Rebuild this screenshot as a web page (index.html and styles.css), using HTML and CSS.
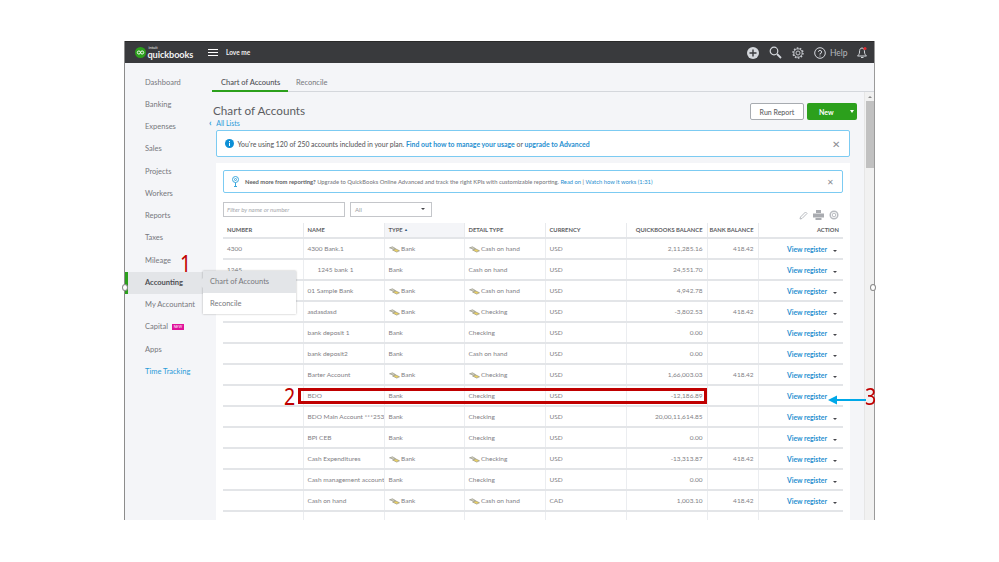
FILE: index.html
```html
<!DOCTYPE html>
<html lang="en">
<head>
<meta charset="utf-8">
<title>Chart of Accounts</title>
<link rel="stylesheet" href="styles.css">
</head>
<body>
<svg class="defs" width="0" height="0" aria-hidden="true">
  <symbol id="cash" viewBox="0 0 11 7">
    <path d="M.5 1.800 3.500.8 6.500 2.500 4.500 3.200z" fill="#d8d6c0" stroke="#8a8a80" stroke-width=".6"/>
    <path d="M3.500 4l3.500-1 3.500 1.800-2.800 1.300z" fill="#ecd264" stroke="#8a8a80" stroke-width=".6"/>
  </symbol>
</svg>
<div class="frame">
  <header class="topbar">
    <div class="logo">
      <svg class="logo-mark" viewBox="0 0 12 12" width="11" height="11"><circle cx="6" cy="6" r="6" fill="#2ca01c"/><circle cx="4.200" cy="6" r="1.700" fill="none" stroke="#fff" stroke-width="1"/><circle cx="7.800" cy="6" r="1.700" fill="none" stroke="#fff" stroke-width="1"/></svg>
      <div class="logo-text"><span class="intuit">intuit</span><span class="qb">quickbooks</span></div>
    </div>
    <div class="burger"><i></i><i></i><i></i></div>
    <span class="company">Love me</span>
    <div class="top-icons">
      <svg width="12" height="12" viewBox="0 0 12 12"><circle cx="6" cy="6" r="6" fill="#d4d7dc"/><path d="M6 2.500v7M2.500 6h7" stroke="#393a3d" stroke-width="1.400"/></svg>
      <svg width="13" height="13" viewBox="0 0 13 13" fill="none" stroke="#d4d7dc"><circle cx="5" cy="5" r="3.800" stroke-width="1.200"/><path d="M8 8l4 4" stroke-width="1.800"/></svg>
      <svg width="12" height="12" viewBox="0 0 12 12" fill="none" stroke="#c4c7cc"><circle cx="6" cy="6" r="2" stroke-width="1"/><circle cx="6" cy="6" r="4.200" stroke-width="1"/><circle cx="6" cy="6" r="5" stroke-width="1.400" stroke-dasharray="1.600 1.500"/></svg>
      <span class="help"><svg width="12" height="12" viewBox="0 0 12 12" fill="none" stroke="#d4d7dc"><circle cx="6" cy="6" r="5.300"/><path d="M4.400 4.800A1.600 1.600 0 1 1 6 6.600v1M6 8.600v1"/></svg><span class="help-text">Help</span></span>
      <svg class="bell" width="13" height="13" viewBox="0 0 13 13" fill="none"><path d="M6 2C4 2 3.500 4 3.500 6c0 2-1 3-2 4h9c-1-1-2-2-2-4 0-2-.5-4-2.500-4zM5 11.500h2.500" stroke="#d4d7dc"/><circle cx="9" cy="2.500" r="1.500" fill="#e0282e"/></svg>
    </div>
  </header>
  <div class="body">
    <nav class="sidebar">
      <a class="nav-item">Dashboard</a>
      <a class="nav-item">Banking</a>
      <a class="nav-item">Expenses</a>
      <a class="nav-item">Sales</a>
      <a class="nav-item">Projects</a>
      <a class="nav-item">Workers</a>
      <a class="nav-item">Reports</a>
      <a class="nav-item">Taxes</a>
      <a class="nav-item">Mileage</a>
      <a class="nav-item active">Accounting</a>
      <a class="nav-item">My Accountant</a>
      <a class="nav-item">Capital <span class="new-badge">NEW</span></a>
      <a class="nav-item">Apps</a>
      <a class="nav-item link">Time Tracking</a>
    </nav>
    <main class="main">
      <div class="tabs">
        <span class="tab current">Chart of Accounts</span>
        <span class="tab">Reconcile</span>
      </div>
      <div class="workspace">
        <div class="content">
          <div class="title-row">
            <div class="title-col">
              <h1 class="title">Chart of Accounts</h1>
              <a class="all-lists"><span class="chev">‹</span> All Lists</a>
            </div>
            <div class="actions">
              <button class="btn-run">Run Report</button>
              <div class="btn-new"><span class="new-label">New</span><span class="new-caret"></span></div>
            </div>
          </div>
          <div class="banner">
            <svg class="info" width="9" height="9" viewBox="0 0 9 9"><circle cx="4.500" cy="4.500" r="4.500" fill="#0d8fd6"/><path d="M4.500 2v1M4.500 3.800V7" stroke="#fff"/></svg>
            <span class="banner-text"><span>You're using 120 of 250 accounts included in your plan.</span> <a class="blue">Find out how to manage your usage</a> or <a class="blue">upgrade to Advanced</a></span>
            <span class="close">✕</span>
          </div>
          <section class="panel">
            <div class="banner small">
              <svg class="bulb" width="7" height="11" viewBox="0 0 7 11" fill="none" stroke="#3aa7dc"><circle cx="3.500" cy="3.500" r="3"/><circle cx="3.500" cy="3.500" r="1"/><path d="M3.500 6.500V10M2 10.500h3"/></svg>
              <span class="banner-text"><b class="need">Need more from reporting?</b> Upgrade to QuickBooks Online Advanced and track the right KPIs with customizable reporting. <a class="blue">Read on</a> | <a class="blue">Watch how it works (1:31)</a></span>
              <span class="close">✕</span>
            </div>
            <div class="filters">
              <span class="filter-input">Filter by name or number</span>
              <span class="filter-select">All<i class="caret"></i></span>
            </div>
            <div class="tools">
              <svg width="9" height="9" viewBox="0 0 9 9" fill="none" stroke="#b8bbc0"><path d="M1 8l.5-2L6.500 1 8 2.500 3 7.500z"/></svg>
              <svg width="11" height="10" viewBox="0 0 11 10"><path d="M3 0h5v3H3zM0 3.500h11v4H0zM2.500 8h6v2h-6z" fill="#a9abb0"/></svg>
              <svg width="10" height="10" viewBox="0 0 10 10" fill="none" stroke="#b8bbc0"><circle cx="5" cy="5" r="1.800"/><circle cx="5" cy="5" r="3.800" stroke-width="1.500"/></svg>
            </div>
            <table class="accounts">
              <colgroup><col class="c1"><col class="c2"><col class="c3"><col class="c4"><col class="c5"><col class="c6"><col class="c7"><col class="c8"></colgroup>
              <thead><tr><th>NUMBER</th><th>NAME</th><th class="sorted">TYPE <span class="up">▲</span></th><th>DETAIL TYPE</th><th>CURRENCY</th><th class="r">QUICKBOOKS BALANCE</th><th class="r">BANK BALANCE</th><th class="r">ACTION</th></tr></thead>
              <tbody>
                <tr><td>4300</td><td>4300 Bank.1</td><td><svg class="ci"><use href="#cash"/></svg>Bank</td><td><svg class="ci"><use href="#cash"/></svg>Cash on hand</td><td>USD</td><td class="r">2,11,285.16</td><td class="r">418.42</td><td class="act"><a>View register</a><i class="caret"></i></td></tr>
                <tr><td>1245</td><td class="indent">1245 bank 1</td><td>Bank</td><td>Cash on hand</td><td>USD</td><td class="r">24,551.70</td><td class="r"></td><td class="act"><a>View register</a><i class="caret"></i></td></tr>
                <tr><td></td><td>01 Sample Bank</td><td><svg class="ci"><use href="#cash"/></svg>Bank</td><td><svg class="ci"><use href="#cash"/></svg>Cash on hand</td><td>USD</td><td class="r">4,942.78</td><td class="r"></td><td class="act"><a>View register</a><i class="caret"></i></td></tr>
                <tr><td></td><td>asdasdasd</td><td><svg class="ci"><use href="#cash"/></svg>Bank</td><td><svg class="ci"><use href="#cash"/></svg>Checking</td><td>USD</td><td class="r">-3,802.53</td><td class="r">418.42</td><td class="act"><a>View register</a><i class="caret"></i></td></tr>
                <tr><td></td><td>bank deposit 1</td><td>Bank</td><td>Checking</td><td>USD</td><td class="r">0.00</td><td class="r"></td><td class="act"><a>View register</a><i class="caret"></i></td></tr>
                <tr><td></td><td>bank deposit2</td><td>Bank</td><td>Cash on hand</td><td>USD</td><td class="r">0.00</td><td class="r"></td><td class="act"><a>View register</a><i class="caret"></i></td></tr>
                <tr><td></td><td>Barter Account</td><td><svg class="ci"><use href="#cash"/></svg>Bank</td><td><svg class="ci"><use href="#cash"/></svg>Checking</td><td>USD</td><td class="r">1,66,003.03</td><td class="r">418.42</td><td class="act"><a>View register</a><i class="caret"></i></td></tr>
                <tr><td></td><td>BDO</td><td>Bank</td><td>Checking</td><td>USD</td><td class="r">-12,186.89</td><td class="r"></td><td class="act"><a>View register</a><i class="caret hidden"></i></td></tr>
                <tr><td></td><td>BDO Main Account ***2536</td><td>Bank</td><td>Checking</td><td>USD</td><td class="r">20,00,11,614.85</td><td class="r"></td><td class="act"><a>View register</a><i class="caret"></i></td></tr>
                <tr><td></td><td>BPI CEB</td><td>Bank</td><td>Checking</td><td>USD</td><td class="r">0.00</td><td class="r"></td><td class="act"><a>View register</a><i class="caret"></i></td></tr>
                <tr><td></td><td>Cash Expenditures</td><td><svg class="ci"><use href="#cash"/></svg>Bank</td><td><svg class="ci"><use href="#cash"/></svg>Checking</td><td>USD</td><td class="r">-13,313.87</td><td class="r">418.42</td><td class="act"><a>View register</a><i class="caret"></i></td></tr>
                <tr><td></td><td>Cash management account</td><td>Bank</td><td>Checking</td><td>USD</td><td class="r">0.00</td><td class="r"></td><td class="act"><a>View register</a><i class="caret"></i></td></tr>
                <tr><td></td><td>Cash on hand</td><td><svg class="ci"><use href="#cash"/></svg>Bank</td><td><svg class="ci"><use href="#cash"/></svg>Cash on hand</td><td>CAD</td><td class="r">1,003.10</td><td class="r">418.42</td><td class="act"><a>View register</a><i class="caret"></i></td></tr>
                <tr><td></td><td></td><td></td><td></td><td></td><td></td><td></td><td></td></tr>
              </tbody>
            </table>
          </section>
        </div>
        <div class="scrollbar"><span class="sb-up"></span><span class="sb-thumb"></span></div>
      </div>
    </main>
  </div>
  <div class="flyout">
    <a class="fly-item on">Chart of Accounts</a>
    <a class="fly-item">Reconcile</a>
  </div>
  <span class="handle left"></span>
  <span class="handle right"></span>
  <span class="mark m1">1</span>
  <span class="mark m2">2</span>
  <span class="mark m3">3</span>
  <span class="highlight"></span>
  <svg class="arrow" width="38" height="10" viewBox="0 0 38 10"><path d="M8 5h30" stroke="#00a8e8" stroke-width="2"/><path d="M0 5l9-4.500v9z" fill="#00a8e8"/></svg>
</div>
</body>
</html>
```
FILE: styles.css
```css
* { box-sizing: border-box; }
html, body { margin: 0; height: 100%; background: #fff; overflow: hidden; }
body { padding: 41px 0 0 124px; font-family: Lato, "Open Sans", sans-serif; color: #6b6c72; }
.defs { position: absolute; }
a { color: inherit; text-decoration: none; }
.frame { position: relative; width: 751px; height: 479px; display: flex; flex-direction: column; border-left: 1px solid #8c8c8c; border-right: 1px solid #9a9a9a; filter: blur(.45px); }

.topbar { height: 22px; flex: none; background: #393a3d; display: flex; align-items: center; color: #fff; border-top: 1px solid #2a2a2a; }
.logo { display: flex; align-items: center; margin-left: 10px; width: 73px; gap: 1.500px; }
.logo-mark { flex: none; }
.logo-text { display: flex; flex-direction: column; line-height: 1; }
.intuit { font-size: 4px; height: 4px; line-height: 4px; margin-left: 1px; color: #e8e8e8; }
.qb { font-size: 9.200px; height: 10px; line-height: 9px; font-weight: 700; color: #f2f2f2; letter-spacing: -.1px; }
.burger { width: 10px; display: flex; flex-direction: column; gap: 2px; }
.burger i { display: block; height: 1.300px; background: #fff; }
.company { margin-left: 8px; font-size: 6.500px; font-weight: 700; color: #eee; }
.top-icons { margin-left: auto; display: flex; align-items: center; gap: 10px; padding-right: 5px; }
.help { display: flex; align-items: center; gap: 4px; }
.help-text { width: 16px; font-size: 8.500px; color: #b4b7bc; }

.body { flex: 1; display: flex; min-height: 0; overflow: hidden; background: #f4f5f8; }
.sidebar { width: 84px; flex: none; padding-top: 8.500px; display: flex; flex-direction: column; }
.nav-item { height: 22.260px; line-height: 22px; padding-left: 20px; font-size: 7.500px; color: #77787d; white-space: nowrap; }
.nav-item.active { background: #e3e5e8; border-left: 3px solid #2ca01c; padding-left: 17px; font-weight: 700; color: #4f5055; }
.nav-item.link { color: #2a9bd8; }
.new-badge { display: inline-block; background: #e0129a; color: #fff; font-size: 3.500px; line-height: 6px; height: 6px; width: 12px; text-align: center; vertical-align: 1px; margin-left: 2px; }

.main { flex: 1; min-width: 0; display: flex; flex-direction: column; }
.tabs { height: 29px; flex: none; margin-left: 3px; border-bottom: 1px solid #d4d7dc; display: flex; }
.tab { font-size: 7.500px; line-height: 39px; height: 29px; padding: 0 9px; color: #77787d; }
.tab:not(.current) { padding-left: 8px; }
.tab.current { width: 76px; color: #4f5055; font-weight: 500; border-bottom: 2px solid #2ca01c; white-space: nowrap; }
.workspace { flex: 1; min-height: 0; display: flex; }
.content { flex: 1; min-width: 0; overflow: hidden; padding: 11px 14px 0 7px; }
.title-row { display: flex; justify-content: space-between; margin-left: -3px; margin-right: -7px; height: 25px; }
.title { margin: 0; font-size: 11.700px; font-weight: 400; line-height: 15px; color: #5c5d62; white-space: nowrap; }
.all-lists { display: block; margin-left: -4px; font-size: 7px; line-height: 10px; color: #2a9bd8; white-space: nowrap; }
.chev { font-weight: 700; font-size: 9px; line-height: 8px; margin-right: 3px; }
.actions { display: flex; gap: 3px; height: 18px; }
.btn-run { width: 54px; height: 17px; padding: 0; background: #fff; border: 1px solid #a7abb0; border-radius: 2px; font: 500 7px Lato, sans-serif; color: #5c5d62; }
.btn-new { width: 50px; height: 17px; background: #2ca01c; border-radius: 2px; display: flex; align-items: center; position: relative; color: #fff; font-size: 7px; font-weight: 700; }
.new-label { margin-left: 12px; }
.new-caret { position: absolute; right: 3px; top: 7px; border: 2.500px solid transparent; border-top: 3px solid #fff; border-bottom: 0; }

.banner { height: 27px; margin-top: 2px; background: #fff; border: 1px solid #7ccbf2; border-radius: 2px; display: flex; align-items: center; padding-left: 8px; font-size: 6.900px; font-weight: 500; color: #5c5d62; }
.banner-text { margin-left: 3.500px; white-space: nowrap; }
.blue { color: #1f8fd0; font-weight: 700; }
.close { margin-left: auto; margin-right: 9px; font-size: 10px; color: #8b8d92; }
.panel { margin-top: 6px; background: #fff; padding: 7px 7px 0; }
.banner.small { height: 23px; margin-top: 0; padding-left: 8px; font-size: 5.820px; color: #7b7c82; }
.banner.small .banner-text { margin-left: 6px; }
.banner.small .blue { font-weight: 400; }
.banner.small .close { margin-right: 8px; font-size: 8px; }
.need { font-weight: 700; color: #5c5d62; }
.filters { display: flex; gap: 5px; margin-top: 9px; height: 15px; }
.filter-input, .filter-select { height: 15px; background: #fff; border: 1px solid #c4c6ca; line-height: 13px; font-size: 6px; padding-left: 3px; }
.filter-input { width: 122px; font-style: italic; color: #a6a8ad; }
.filter-select { width: 82px; color: #9a9ca1; padding-left: 4px; position: relative; }
.filter-select .caret { position: absolute; right: 6px; top: 5px; }
.caret { display: inline-block; border: 2px solid transparent; border-top: 2.500px solid #44454a; border-bottom: 0; }
.caret.hidden { visibility: hidden; }
.tools { position: absolute; right: 35px; top: 169px; display: flex; gap: 5px; align-items: center; }

.accounts { width: 620px; table-layout: fixed; border-collapse: collapse; margin-top: 6px; font-size: 6.500px; color: #7f8085; }
.c1 { width: 80px; } .c2 { width: 81px; } .c3 { width: 80px; } .c4 { width: 81px; } .c5 { width: 81px; } .c6 { width: 81px; } .c7 { width: 51px; } .c8 { width: 85px; }
.accounts th { height: 15px; padding: 0 4px 2px; text-align: left; font-size: 5.800px; font-weight: 700; color: #5c5d62; border-left: 1px solid #e8eaed; white-space: nowrap; overflow: hidden; }
.accounts th:first-child, .accounts td:first-child { border-left: 0; }
.accounts th.sorted { background: #f4f5f8; }
.up { font-size: 4px; color: #30557a; vertical-align: 1px; }
.accounts td { height: 21px; padding: 0 0 0 4px; border-top: 2px solid #e3e5e8; border-left: 1px solid #ebedf0; white-space: nowrap; overflow: hidden; }
.accounts th.r, .accounts td.r { text-align: right; padding-right: 4px; padding-left: 0; }
.accounts td.indent { padding-left: 14px; }
.ci { width: 11px; height: 7px; margin: -2px 1.500px -2px 0; vertical-align: middle; }
.act { text-align: right; padding-right: 6px !important; }
.act a { color: #1f8fd0; font-weight: 700; font-size: 6.800px; margin-right: 6px; position: relative; top: .5px; }
.act .caret { position: relative; top: 0; }
.accounts tr td.act { padding-left: 0; }

.scrollbar { width: 10px; flex: none; background: #f1f1f1; display: flex; flex-direction: column; align-items: center; border-left: 1px solid #e6e6e6; }
.sb-up { margin-top: 4px; border: 2px solid transparent; border-bottom: 2px solid #8a8a8a; border-top: 0; }
.sb-thumb { margin-top: 3px; width: 8px; height: 67px; background: #c1c1c1; }

.flyout { position: absolute; left: 78px; top: 230px; width: 93px; height: 43px; background: #fff; box-shadow: 0 0 2px rgba(0,0,0,.3); font-size: 7.500px; color: #77787d; }
.flyout::before { content: ""; position: absolute; left: -5px; top: 7px; border: 5px solid transparent; border-left: 0; border-right-color: #e3e5e8; }
.fly-item { display: block; height: 22px; line-height: 21px; padding-left: 7px; white-space: nowrap; }
.fly-item.on { background: #e3e5e8; }
.handle { position: absolute; top: 243px; width: 6px; height: 7px; border-radius: 50%; background: #fff; border: 1px solid #8c8c8c; }
.handle.left { left: -3px; }
.handle.right { right: -2px; }
.mark { position: absolute; font-family: "Noto Sans", sans-serif; font-size: 23px; line-height: 20px; color: #c00000; transform: scaleX(.85); transform-origin: left center; }
.m1 { left: 55px; top: 212px; }
.m2 { left: 159px; top: 345px; }
.m3 { left: 740px; top: 345px; }
.highlight { position: absolute; left: 173px; top: 347px; width: 409px; height: 16px; border: 3px solid #c00000; }
.arrow { position: absolute; left: 703px; top: 354px; }
```
